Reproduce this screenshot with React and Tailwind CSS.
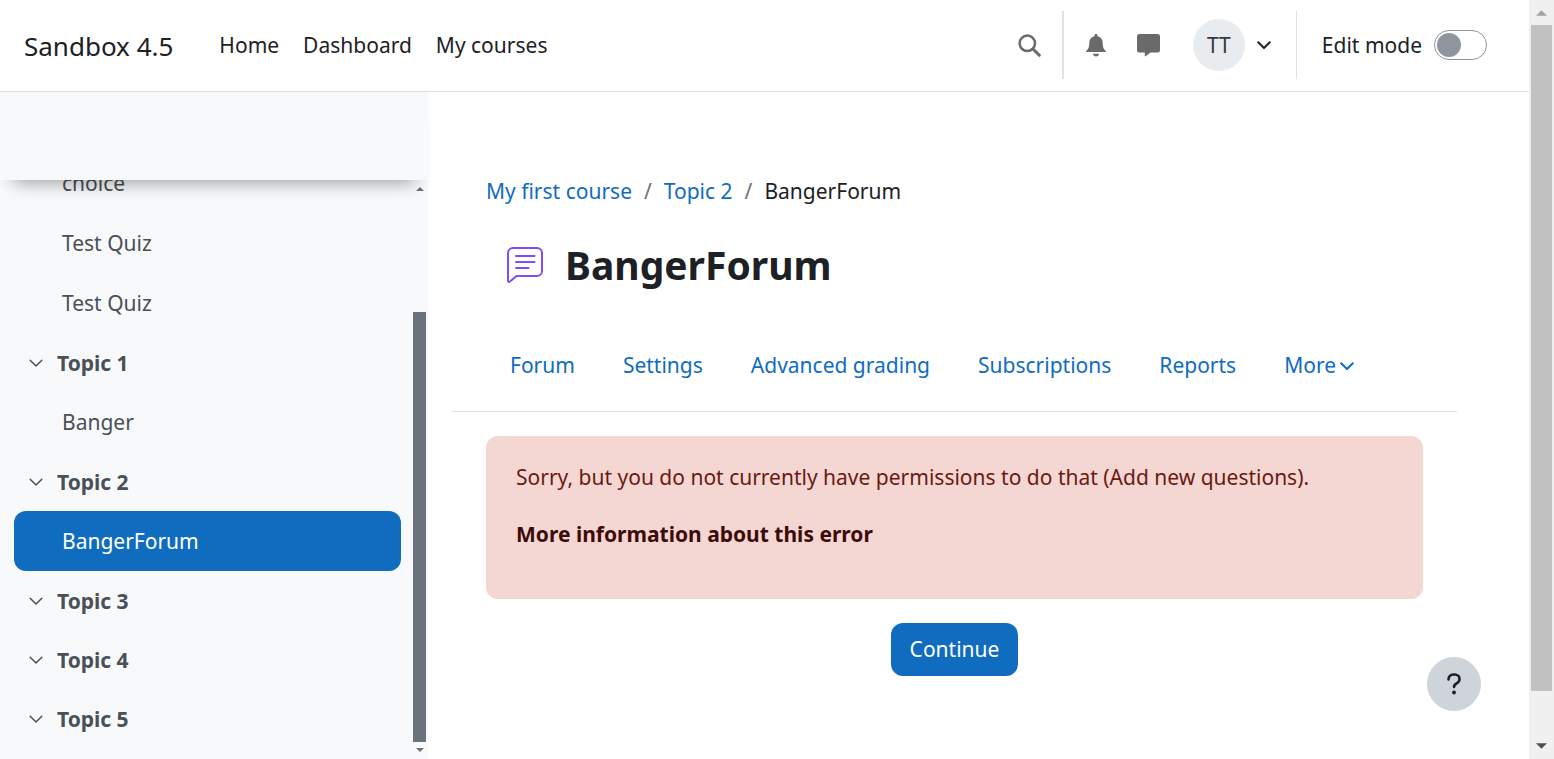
const sections = [
  { type: "item", label: "choice" },
  { type: "item", label: "Test Quiz" },
  { type: "item", label: "Test Quiz" },
  { type: "topic", label: "Topic 1" },
  { type: "item", label: "Banger" },
  { type: "topic", label: "Topic 2" },
  { type: "active", label: "BangerForum" },
  { type: "topic", label: "Topic 3" },
  { type: "topic", label: "Topic 4" },
  { type: "topic", label: "Topic 5" },
];

const tabs = ["Forum", "Settings", "Advanced grading", "Subscriptions", "Reports"];

function Chevron({ className, stroke = 2 }) {
  return (
    <svg viewBox="0 0 14 14" className={className} fill="none" stroke="currentColor" strokeWidth={stroke} strokeLinecap="round" strokeLinejoin="round" aria-hidden="true">
      <path d="M1.200 4.200l5.800 5.800 5.800-5.800" />
    </svg>
  );
}

function Triangle({ down, className }) {
  return (
    <svg viewBox="0 0 10 5" className={className} fill="currentColor" aria-hidden="true">
      <path d={down ? "M0 0h10L5 5z" : "M0 5h10L5 0z"} />
    </svg>
  );
}

function SearchIcon() {
  return (
    <svg viewBox="0 0 23 23" className="size-[23px]" fill="none" stroke="currentColor" aria-hidden="true">
      <circle cx="9.300" cy="9.300" r="7.700" strokeWidth="2.500" />
      <path d="M15 15l6.300 6.300" strokeWidth="3" strokeLinecap="round" />
    </svg>
  );
}

function BellIcon() {
  return (
    <svg viewBox="0 0 20 23" className="h-[23px] w-5" fill="currentColor" aria-hidden="true">
      <path d="M10 0c.9 0 1.500.6 1.500 1.400v.8c3.200.7 5.200 3.200 5.200 6.300 0 4.500.9 6.200 2.500 7.900.6.600.8 1.100.8 1.600h-20c0-.5.2-1 .8-1.600 1.600-1.700 2.500-3.400 2.500-7.900 0-3.100 2-5.600 5.200-6.300v-.8C8.500.6 9.100 0 10 0z" />
      <path d="M7 19.800h6c-.3 1.700-1.500 2.700-3 2.700s-2.700-1-3-2.700z" />
    </svg>
  );
}

function MessageIcon() {
  return (
    <svg viewBox="0 0 23 23" className="size-[23px]" fill="currentColor" aria-hidden="true">
      <path d="M2.500 0h18A2.500 2.500 0 0 1 23 2.500v13.500a2.500 2.500 0 0 1-2.500 2.500H13.500L8.700 22.200c-.4.300-.9.100-.9-.4v-3.300H2.500A2.500 2.500 0 0 1 0 16V2.500A2.500 2.500 0 0 1 2.500 0z" />
    </svg>
  );
}

function Header() {
  return (
    <header className="flex h-[92px] shrink-0 items-center border-b border-[#dee2e6] bg-white pl-6 pr-[42px] text-[#1d2125]">
      <a href="#" className="mr-[46px] text-[26px] leading-9">Sandbox 4.5</a>
      <nav className="flex gap-6">
        <a href="#">Home</a>
        <a href="#">Dashboard</a>
        <a href="#">My courses</a>
      </nav>
      <div className="ml-auto flex items-center pb-px text-[#6a6a6a]">
        <button aria-label="Search" className="mr-[21px]"><SearchIcon /></button>
        <div className="h-[68px] w-[2px] bg-[#dee2e6]" />
        <button aria-label="Notifications" className="ml-[22px]"><BellIcon /></button>
        <button aria-label="Messages" className="ml-[31px]"><MessageIcon /></button>
        <button aria-label="User menu" className="ml-[33px] flex items-center text-[#1d2125]">
          <span className="flex size-[52px] items-center justify-center rounded-full bg-[#e9ecef] text-[#343a40]">TT</span>
          <Chevron className="ml-3 size-[14px]" />
        </button>
        <div className="ml-[25px] h-[68px] w-px bg-[#dee2e6]" />
        <label htmlFor="edit-mode" className="ml-[25px] text-[#1d2125]">Edit mode</label>
        <input
          id="edit-mode"
          type="checkbox"
          role="switch"
          className="ml-3 flex h-[30px] w-[53px] appearance-none items-center rounded-full border border-[#8f959e] bg-white pl-[2px] before:size-6 before:rounded-full before:bg-[#8f959e] checked:justify-end"
        />
      </div>
    </header>
  );
}

function CourseIndex() {
  return (
    <aside className="flex w-[428px] shrink-0 flex-col bg-[#f8f9fb]">
      <div className="relative z-10 h-[88px] shrink-0 bg-[#f8f9fb] shadow-[0_18px_16px_-14px_rgba(0,0,0,0.3),0_4px_10px_rgba(0,0,0,0.03)]" />
      <div className="flex min-h-0 flex-1">
        <nav aria-label="Course index" className="flex flex-1 flex-col justify-end overflow-hidden pb-[11px] pl-[14px] pr-3 text-[#495057]">
          {sections.map((s, i) =>
            s.type === "topic" ? (
              <a key={i} href="#" className="flex h-[59px] shrink-0 items-center pl-[15px] pt-px font-bold">
                <Chevron className="mr-[14px] size-[14px]" stroke={1.5} />
                {s.label}
              </a>
            ) : (
              <a
                key={i}
                href="#"
                className={
                  s.type === "active"
                    ? "flex h-[60px] shrink-0 items-center rounded-xl bg-[#0f6cbf] pl-12 text-white"
                    : "flex h-[60px] shrink-0 items-center pl-12"
                }
              >
                {s.label}
              </a>
            )
          )}
        </nav>
        <div className="mr-[2px] flex w-[13px] flex-col items-center text-[#6a737b]">
          <Triangle className="mt-[7px] h-1 w-2" />
          <div className="mt-[121px] w-full flex-1 bg-[#6a737b]" />
          <Triangle down className="mb-[7px] mt-1.5 h-1 w-2" />
        </div>
      </div>
    </aside>
  );
}

function ForumIcon() {
  return (
    <svg viewBox="0 0 36 36" className="size-9" fill="none" stroke="#7f4cfd" strokeWidth="2" strokeLinecap="round" strokeLinejoin="round" aria-hidden="true">
      <path d="M6 1h24a5 5 0 0 1 5 5v18a5 5 0 0 1-5 5H9.500l-6.500 5.500c-1 .8-2 .5-2-.8V6a5 5 0 0 1 5-5z" />
      <path d="M9 9h18.500M9 15h18.500M9 21h12.500" />
    </svg>
  );
}

function Main() {
  return (
    <main className="relative min-w-0 flex-1 overflow-hidden pl-6 pr-[72px] pt-[83px]">
      <nav aria-label="Breadcrumb" className="flex gap-3 px-[34px] text-[#0f6cbf]">
        <a href="#">My first course</a>
        <span className="text-[#6a737b]">/</span>
        <a href="#">Topic 2</a>
        <span className="text-[#6a737b]">/</span>
        <span className="text-[#1d2125]">BangerForum</span>
      </nav>
      <div className="mt-[33px] flex items-center gap-[22px] pl-[55px]">
        <ForumIcon />
        <h1 className="text-[39px] font-bold leading-[48px] text-[#1d2125]">BangerForum</h1>
      </div>
      <nav aria-label="Forum" className="mt-[31px] flex h-[92px] items-center gap-12 border-b border-[#dee2e6] pl-[58px] text-[#0f6cbf]">
        {tabs.map((t) => (
          <a key={t} href="#">{t}</a>
        ))}
        <button className="flex items-center gap-1">
          More
          <Chevron className="size-[14px]" />
        </button>
      </nav>
      <div className="px-[34px] pt-6">
        <div role="alert" className="h-[163px] rounded-xl bg-[#f4d6d2] px-[30px] pt-[25px] text-[#6b1a12]">
          <p>Sorry, but you do not currently have permissions to do that (Add new questions).</p>
          <a href="#" className="mt-6 block font-bold text-[#3d0b08]">More information about this error</a>
        </div>
        <div className="mt-6 flex justify-center">
          <button className="h-[53px] rounded-xl bg-[#0f6cbf] px-[19px] text-white">Continue</button>
        </div>
      </div>
      <button aria-label="Help" className="absolute bottom-12 right-12 flex size-[54px] items-center justify-center rounded-full bg-[#ced4da] text-[#1d2125]">
        <svg viewBox="0 0 14 22" className="h-[22px] w-[14px]" fill="none" stroke="currentColor" strokeWidth="2.600" strokeLinecap="round" strokeLinejoin="round" aria-hidden="true">
          <path d="M1.500 6.500c0-3 2-5 5-5h1c3 0 5 2 5 4.500 0 2-1 3.300-2.500 4.200S7 12 7 14" />
          <circle cx="7" cy="19.500" r="1.900" fill="currentColor" stroke="none" />
        </svg>
      </button>
    </main>
  );
}

export default function App() {
  return (
    <div className="flex h-screen bg-white font-['Noto_Sans','Open_Sans',sans-serif] text-[21px] leading-[33px]">
      <div className="flex min-w-0 flex-1 flex-col">
        <Header />
        <div className="flex min-h-0 flex-1">
          <CourseIndex />
          <Main />
        </div>
      </div>
      <div className="flex w-[25px] shrink-0 flex-col items-center bg-[#f0f0f0] px-[2px]">
        <Triangle className="mt-[10px] h-[6px] w-[11px] text-[#a3a3a3]" />
        <div className="mt-[9px] w-full flex-1 bg-[#c1c1c1]" />
        <Triangle down className="mb-[10px] mt-[52px] h-[6px] w-[11px] text-[#505050]" />
      </div>
    </div>
  );
}
